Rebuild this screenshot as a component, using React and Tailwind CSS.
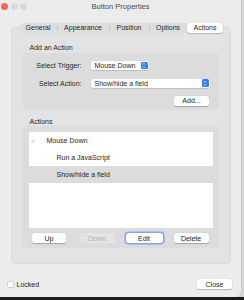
import React from "react";

const font = { fontFamily: '"Liberation Sans", Arial, sans-serif' };

function Btn({ children, className = "", disabled, focused }) {
  return (
    <div
      className={
        "flex items-center justify-center h-[10px] rounded-[2.5px] text-[7px] leading-none " +
        (disabled
          ? "bg-[#e4e4e4] text-[#b0b0b0] "
          : "bg-white text-[#262626] shadow-[0_0.5px_1px_rgba(0,0,0,0.25)] ") +
        (focused ? "ring-[1.5px] ring-[#7fa6f5] " : "") +
        className
      }
    >
      {children}
    </div>
  );
}

function Stepper() {
  return (
    <div className="w-[6.5px] h-[7.5px] rounded-[1.5px] bg-[#2f7cf6] flex flex-col items-center justify-center gap-[1px]">
      <svg width="4" height="2" viewBox="0 0 4 2"><path d="M0.5 1.7 L2 0.3 L3.5 1.7" stroke="white" strokeWidth="0.7" fill="none" /></svg>
      <svg width="4" height="2" viewBox="0 0 4 2"><path d="M0.5 0.3 L2 1.7 L3.5 0.3" stroke="white" strokeWidth="0.7" fill="none" /></svg>
    </div>
  );
}

function Popup({ text, className }) {
  return (
    <div className={"h-[9px] bg-white rounded-[2.5px] shadow-[0_0.5px_1px_rgba(0,0,0,0.25)] flex items-center justify-between pl-[4px] pr-[1px] " + className}>
      <span className="text-[7px] leading-none text-[#262626]">{text}</span>
      <Stepper />
    </div>
  );
}

export default function App() {
  return (
    <div className="w-[244px] h-[300px] bg-[#d6d6d6] relative overflow-hidden" style={font}>
      <div className="absolute left-0 right-0 bottom-0 h-[3px] bg-[#1c1c1c]" />
      <div className="relative w-[242px] h-[297px] bg-[#ececec] rounded-br-[6px] border-r border-[#c9c9c9] flex flex-col">
        {/* title bar */}
        <div className="h-[14px] relative flex items-center justify-center">
          <div className="absolute left-[1px] top-[2.5px] flex gap-[2.5px]">
            <div className="w-[7px] h-[7px] rounded-full bg-[#fe5f57]" />
            <div className="w-[7px] h-[7px] rounded-full bg-[#d9d9d9]" />
            <div className="w-[7px] h-[7px] rounded-full bg-[#d9d9d9]" />
          </div>
          <span className="text-[7.5px] text-[#4a4a4a] leading-none mt-[-1px]">Button Properties</span>
        </div>

        {/* panel */}
        <div className="relative mx-[10.5px] mt-[13px] h-[237px] bg-[#e3e3e3] rounded-[4px] border border-[#dadada] flex flex-col">
          {/* tabs */}
          <div className="absolute left-[8px] top-[-5.5px] w-[204px] h-[10px] bg-[#dedede] rounded-[3px] flex items-center text-[7px] text-[#262626] leading-none">
            <div className="w-[37px] flex justify-center">General</div>
            <div className="w-[0.5px] h-[5px] bg-[#c4c4c4]" />
            <div className="w-[52px] flex justify-center">Appearance</div>
            <div className="w-[0.5px] h-[5px] bg-[#c4c4c4]" />
            <div className="w-[39px] flex justify-center">Position</div>
            <div className="w-[0.5px] h-[5px] bg-[#c4c4c4]" />
            <div className="w-[38px] flex justify-center">Options</div>
            <div className="w-[36px] h-[10px] bg-white rounded-[3px] shadow-[0_0.5px_1px_rgba(0,0,0,0.2)] flex items-center justify-center">Actions</div>
          </div>

          <div className="pt-[16px] px-[11px] flex flex-col">
            <div className="text-[7px] leading-none text-[#262626] pl-[7px]">Add an Action</div>
            <div className="mt-[2px] h-[57px] bg-[#dcdcdc] rounded-[3px] flex flex-col pt-[8px] px-[2px]">
              <div className="flex items-center">
                <div className="w-[57px] text-right text-[7px] leading-none text-[#262626]">Select Trigger:</div>
                <Popup text="Mouse Down" className="ml-[9px] w-[58px]" />
              </div>
              <div className="flex items-center mt-[8.5px]">
                <div className="w-[57px] text-right text-[7px] leading-none text-[#262626]">Select Action:</div>
                <Popup text="Show/hide a field" className="ml-[9px] w-[119px]" />
              </div>
              <div className="flex justify-end mt-[8px] pr-[7.5px]">
                <Btn className="w-[35px] h-[9px]">Add...</Btn>
              </div>
            </div>

            <div className="mt-[8px] text-[7px] leading-none text-[#262626] pl-[7px]">Actions</div>
            <div className="mt-[1px] h-[122px] bg-[#dcdcdc] rounded-[3px] flex flex-col pt-[6px] px-[6px]">
              <div className="h-[96px] bg-white flex flex-col text-[7px] leading-none text-[#262626]">
                <div className="h-[17px] flex items-center relative">
                  <svg className="absolute left-[2px]" width="4" height="4" viewBox="0 0 4 4"><path d="M0.4 2.2 L1.5 3.3 L3.6 0.6" stroke="#8a8a8a" strokeWidth="0.6" fill="none" /></svg>
                  <span className="pl-[18px]">Mouse Down</span>
                </div>
                <div className="h-[17px] flex items-center"><span className="pl-[28px]">Run a JavaScript</span></div>
                <div className="h-[17px] flex items-center bg-[#dcdcdc]"><span className="pl-[28px]">Show/hide a field</span></div>
              </div>
              <div className="flex items-center mt-[5px] pl-[3.5px]">
                <Btn className="w-[34px]">Up</Btn>
                <Btn disabled className="ml-[13.5px] w-[35px]">Down</Btn>
                <Btn focused className="ml-[11px] w-[37px]">Edit</Btn>
                <Btn className="ml-[11px] w-[35px]">Delete</Btn>
              </div>
            </div>
          </div>
        </div>

        {/* bottom */}
        <div className="mt-auto mb-[8px] flex items-center justify-between pl-[7px] pr-[9px]">
          <div className="flex items-center gap-[2.5px]">
            <div className="w-[7px] h-[7px] bg-white rounded-[1.5px] border border-[#cfcfcf]" />
            <span className="text-[7px] leading-none text-[#262626]">Locked</span>
          </div>
          <Btn className="w-[35px] h-[9px]">Close</Btn>
        </div>
      </div>
    </div>
  );
}
